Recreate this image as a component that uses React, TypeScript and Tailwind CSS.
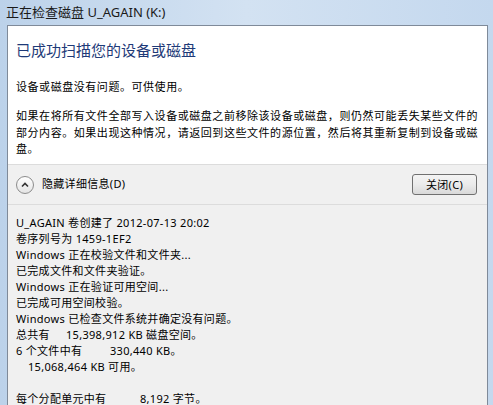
import React from 'react'

const font = { fontFamily: '"Noto Sans", "Noto Sans CJK SC", sans-serif' }

// details lines of the chkdsk result
const DETAILS: React.ReactNode[] = [
  'U_AGAIN 卷创建了 2012-07-13 20:02',
  '卷序列号为 1459-1EF2',
  'Windows 正在校验文件和文件夹...',
  '已完成文件和文件夹验证。',
  'Windows 正在验证可用空间...',
  '已完成可用空间校验。',
  'Windows 已检查文件系统并确定没有问题。',
  <>
    <span className="inline-block w-[50px]">总共有</span>15,398,912 KB 磁盘空间。
  </>,
  <>
    <span className="inline-block w-[94px]">6 个文件中有</span>330,440 KB。
  </>,
  <>
    <span className="inline-block w-[12px]" />15,068,464 KB 可用。
  </>,
  '\u00a0',
  <>
    <span className="inline-block w-[124px]">每个分配单元中有</span>8,192 字节。
  </>,
]

function ChevronCircle() {
  return (
    <div className="w-[18px] h-[18px] rounded-full border border-[#8c8c8c] bg-gradient-to-b from-white to-[#e4e4e4] flex items-center justify-center">
      <svg width="10" height="10" viewBox="0 0 10 10">
        <path d="M2 6.5 L5 3.5 L8 6.5" fill="none" stroke="#333" strokeWidth="1.6" />
      </svg>
    </div>
  )
}

export default function App() {
  return (
    <div
      style={font}
      className="w-[493px] h-[405px] overflow-hidden flex flex-col bg-gradient-to-r from-[#bcd2ea] via-[#d3e2f2] to-[#c4d8ee] text-black"
    >
      {/* title bar */}
      <div className="h-[25px] shrink-0 flex items-center pl-[6px] text-[13px] text-[#1a1a1a]">
        正在检查磁盘 U_AGAIN (K:)
      </div>

      <div className="flex-1 flex pl-[7px] pr-[5px] min-h-0">
        <div className="flex-1 flex flex-col border-l border-t border-r border-[#7f8a99] min-h-0 tracking-[0.3px]">
          {/* main white panel */}
          <div className="bg-white h-[138px] shrink-0 pl-[8px] pr-[4px] tracking-[0.55px]">
            <div className="pt-[14px] text-[15px] leading-[20px] tracking-normal text-[#1e3a78]">
              已成功扫描您的设备或磁盘
            </div>
            <div className="pt-[19px] text-[11px] leading-[16px]">
              设备或磁盘没有问题。可供使用。
            </div>
            <div className="pt-[13px] text-[11px] leading-[16.5px] whitespace-nowrap">
              如果在将所有文件全部写入设备或磁盘之前移除该设备或磁盘，则仍然可能丢失某些文件的
              <br />
              部分内容。如果出现这种情况，请返回到这些文件的源位置，然后将其重新复制到设备或磁
              <br />
              盘。
            </div>
          </div>

          {/* gray lower area */}
          <div className="flex-1 bg-[#f0f0f0] border-t border-[#dcdcdc] min-h-0">
            <div className="h-[40px] flex items-center pl-[8px] pr-[10px] border-b border-[#dcdcdc]">
              <ChevronCircle />
              <span className="ml-[8px] text-[11px]">隐藏详细信息(D)</span>
              <div className="flex-1" />
              <button className="w-[65px] h-[21px] rounded-[3px] border border-[#707070] bg-gradient-to-b from-[#f4f4f4] via-[#ebebeb] to-[#d9d9d9] text-[11px] leading-none">
                关闭(C)
              </button>
            </div>
            <div className="pt-[10px] pl-[8px] text-[11px] leading-[16px] whitespace-nowrap">
              {DETAILS.map((line, i) => (
                <div key={i}>{line}</div>
              ))}
            </div>
          </div>
        </div>
      </div>
    </div>
  )
}
